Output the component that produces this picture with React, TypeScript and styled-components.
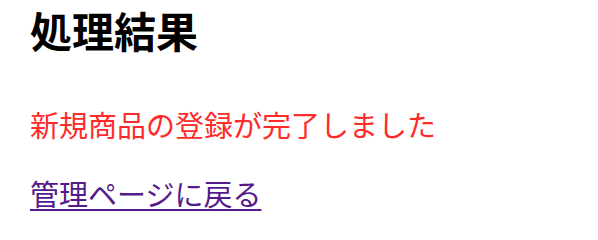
import styled, {createGlobalStyle} from "styled-components";

const GlobalStyle = createGlobalStyle`
  html, body {
    margin: 0;
    padding: 0;
    background: #fff;
  }

  body {
    font-family: "Noto Sans CJK JP", "Noto Sans", sans-serif;
  }
`;

const Page = styled.div`
  padding: 6px 30px 0;
`;

const Title = styled.h2`
  margin: 0;
  font-size: 42px;
  line-height: 48px;
  font-weight: 700;
  color: #000;
`;

const Message = styled.p`
  margin: 52px 0 0;
  font-size: 29px;
  line-height: 36px;
  color: #ff2a2a;
`;

const Nav = styled.p`
  margin: 33px 0 0;
  font-size: 29px;
  line-height: 36px;
`;

const BackLink = styled.a`
  color: #551a8b;
  text-decoration: underline;
  text-decoration-thickness: 2px;
  text-underline-offset: 3px;
`;

export default function App() {
    return (
        <>
            <GlobalStyle/>
            <Page>
                <Title>処理結果</Title>
                <Message>新規商品の登録が完了しました</Message>
                <Nav>
                    <BackLink href="#">管理ページに戻る</BackLink>
                </Nav>
            </Page>
        </>
    );
}
